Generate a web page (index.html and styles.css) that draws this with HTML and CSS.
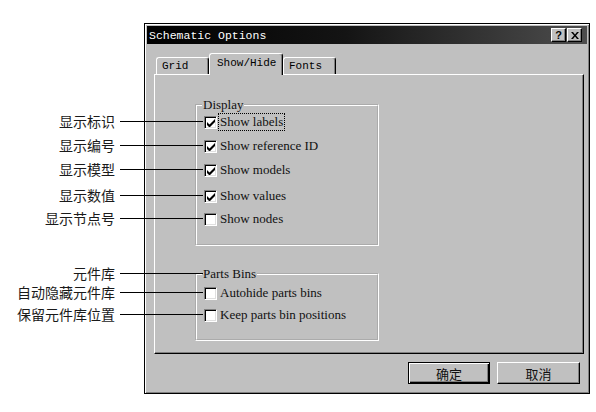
FILE: index.html
```html
<!DOCTYPE html>
<html lang="zh-CN">
<head>
    <meta charset="UTF-8">
    <meta name="viewport" content="width=device-width, initial-scale=1.0">
    <title>Schematic Options</title>
    <link rel="stylesheet" href="styles.css">
</head>
<body>
    <div class="figure">
        <div class="callouts">
            <div class="callout">显示标识</div>
            <div class="callout c2">显示编号</div>
            <div class="callout c3">显示模型</div>
            <div class="callout c4">显示数值</div>
            <div class="callout c5">显示节点号</div>
            <div class="callout c6">元件库</div>
            <div class="callout c7">自动隐藏元件库</div>
            <div class="callout c8">保留元件库位置</div>
        </div>

        <div class="dialog">
            <div class="titlebar">
                <span class="title">Schematic Options</span>
                <div class="cap-buttons">
                    <span class="cap-btn help">?</span>
                    <span class="cap-btn">
                        <svg width="8" height="7" viewBox="0 0 8 7"><path d="M0 0h2l2 2.5L6 0h2L5 3.5 8 7H6L4 4.5 2 7H0l3-3.5z" fill="#000"/></svg>
                    </span>
                </div>
            </div>

            <div class="content">
                <div class="tabs">
                    <div class="tab">Grid</div>
                    <div class="tab active">Show/Hide</div>
                    <div class="tab">Fonts</div>
                </div>

                <div class="panel">
                    <fieldset class="group display">
                        <legend>Display</legend>
                        <label class="check"><span class="box checked"><svg width="8" height="8" viewBox="0 0 8 8"><path d="M0 3 2.5 5.5 8 0v3L2.5 8.5 0 6z" fill="#000"/></svg></span><span class="text focus">Show labels</span></label>
                        <label class="check r2"><span class="box checked"><svg width="8" height="8" viewBox="0 0 8 8"><path d="M0 3 2.5 5.5 8 0v3L2.5 8.5 0 6z" fill="#000"/></svg></span><span class="text">Show reference ID</span></label>
                        <label class="check r3"><span class="box checked"><svg width="8" height="8" viewBox="0 0 8 8"><path d="M0 3 2.5 5.5 8 0v3L2.5 8.5 0 6z" fill="#000"/></svg></span><span class="text">Show models</span></label>
                        <label class="check r4"><span class="box checked"><svg width="8" height="8" viewBox="0 0 8 8"><path d="M0 3 2.5 5.5 8 0v3L2.5 8.5 0 6z" fill="#000"/></svg></span><span class="text">Show values</span></label>
                        <label class="check r5"><span class="box"></span><span class="text">Show nodes</span></label>
                    </fieldset>

                    <fieldset class="group bins">
                        <legend>Parts Bins</legend>
                        <label class="check b1"><span class="box"></span><span class="text">Autohide parts bins</span></label>
                        <label class="check b2"><span class="box"></span><span class="text">Keep parts bin positions</span></label>
                    </fieldset>
                </div>

                <div class="actions">
                    <button class="btn default">确定</button>
                    <button class="btn cancel">取消</button>
                </div>
            </div>
        </div>
    </div>
</body>
</html>
```

FILE: styles.css
```css
* {
    margin: 0;
    padding: 0;
    box-sizing: border-box;
}

body {
    width: 596px;
    height: 412px;
    overflow: hidden;
    background: #fff;
    font-family: 'Liberation Serif', serif;
}

.figure {
    display: flex;
    align-items: flex-start;
    padding-top: 23px;
}

/* labels on the left with their leader lines */
.callouts {
    position: relative;
    z-index: 2;
    flex: none;
    width: 144px;
    padding-top: 89px;
}

.callout {
    position: relative;
    height: 18px;
    line-height: 18px;
    padding-right: 29px;
    text-align: right;
    white-space: nowrap;
    font-family: 'Noto Sans CJK SC', sans-serif;
    font-size: 14px;
    color: #1a1a1a;
}

.callout::after {
    content: "";
    position: absolute;
    left: 120px;
    top: 9px;
    width: 83px;
    height: 1px;
    background: #000;
}

.c2, .c3 { margin-top: 6px; }
.c4 { margin-top: 8px; }
.c5 { margin-top: 5px; }
.c6 { margin-top: 37px; }
.c7 { margin-top: 1px; }
.c8 { margin-top: 4px; }

/* dialog window */
.dialog {
    flex: none;
    width: 446px;
    height: 371px;
    padding: 2px;
    display: flex;
    flex-direction: column;
    background: #c0c0c0;
    border: 1px solid #000;
    box-shadow: inset 1px 1px #fff, inset -1px -1px #808080;
}

.titlebar {
    height: 18px;
    display: flex;
    align-items: center;
    padding: 0 5px 0 2px;
    background: linear-gradient(90deg, #000 0%, #141414 45%, #4d4d4d 100%);
}

.title {
    color: #fff;
    font-family: 'Liberation Mono', monospace;
    font-size: 11.5px;
}

.cap-buttons {
    margin-left: auto;
    display: flex;
    gap: 1px;
}

.cap-btn {
    width: 15px;
    height: 14px;
    display: flex;
    align-items: center;
    justify-content: center;
    background: #c0c0c0;
    border: 1px solid;
    border-color: #fff #000 #000 #fff;
    box-shadow: inset -1px -1px #808080;
}

.help {
    font-family: 'Liberation Sans', sans-serif;
    font-size: 11px;
    font-weight: bold;
    line-height: 1;
}

.content {
    flex: 1;
    display: flex;
    flex-direction: column;
    padding: 9px 5px 0 7px;
}

/* tabs */
.tabs {
    display: flex;
    align-items: flex-end;
    height: 21px;
    padding-left: 2px;
}

.tab {
    width: 53px;
    height: 17px;
    padding: 1px 0 0 5px;
    line-height: 14px;
    font-family: 'Liberation Mono', monospace;
    font-size: 11px;
    color: #000;
    border: 1px solid;
    border-bottom: none;
    border-color: #fff #000 #000 #fff;
    border-radius: 3px 3px 0 0;
    box-shadow: inset -1px 0 #808080;
}

.tab.active {
    position: relative;
    z-index: 1;
    width: 74px;
    height: 22px;
    margin-bottom: -1px;
    padding: 2px 0 0 7px;
    background: #c0c0c0;
}

.panel {
    width: 430px;
    height: 280px;
    padding: 23px 0 0 40px;
    border: 1px solid;
    border-color: #fff #000 #000 #fff;
    box-shadow: inset -1px -1px #808080;
}

/* group boxes */
.group {
    width: 184px;
    padding: 0 8px 15px 7px;
    border: 2px groove #fff;
}

.group legend {
    margin-left: -2px;
    padding: 0 1px;
    font-size: 13px;
    line-height: 14px;
    color: #111;
}

.bins {
    margin-top: 21px;
    padding-bottom: 14px;
}

.check {
    height: 20px;
    display: flex;
    align-items: center;
    font-size: 13px;
    color: #111;
}

.r2, .r3 { margin-top: 4px; }
.r4 { margin-top: 6px; }
.r5 { margin-top: 3px; }
.b1, .b2 { margin-top: 2px; }

.box {
    flex: none;
    width: 13px;
    height: 13px;
    display: flex;
    align-items: center;
    justify-content: center;
    background: #fff;
    border: 1px solid;
    border-color: #808080 #fff #fff #808080;
    box-shadow: inset 1px 1px #000, inset -1px -1px #dfdfdf;
}

.box svg {
    margin: 1px 0 0 1px;
}

.text {
    margin-left: 2px;
    padding: 0 1px;
    line-height: 16px;
    white-space: nowrap;
}

.focus {
    outline: 1px dotted #000;
}

/* buttons */
.actions {
    display: flex;
    justify-content: flex-end;
    gap: 7px;
    margin-top: 8px;
    padding-right: 2px;
}

.btn {
    width: 83px;
    height: 22px;
    font-family: 'Noto Sans CJK SC', sans-serif;
    font-size: 13px;
    color: #111;
    background: #c0c0c0;
    border: 1px solid;
    border-color: #fff #000 #000 #fff;
    box-shadow: inset -1px -1px #808080;
}

.btn.default {
    width: 82px;
    border-color: #000;
    box-shadow: inset 1px 1px #fff, inset -1px -1px #000, inset -2px -2px #808080;
}
```
